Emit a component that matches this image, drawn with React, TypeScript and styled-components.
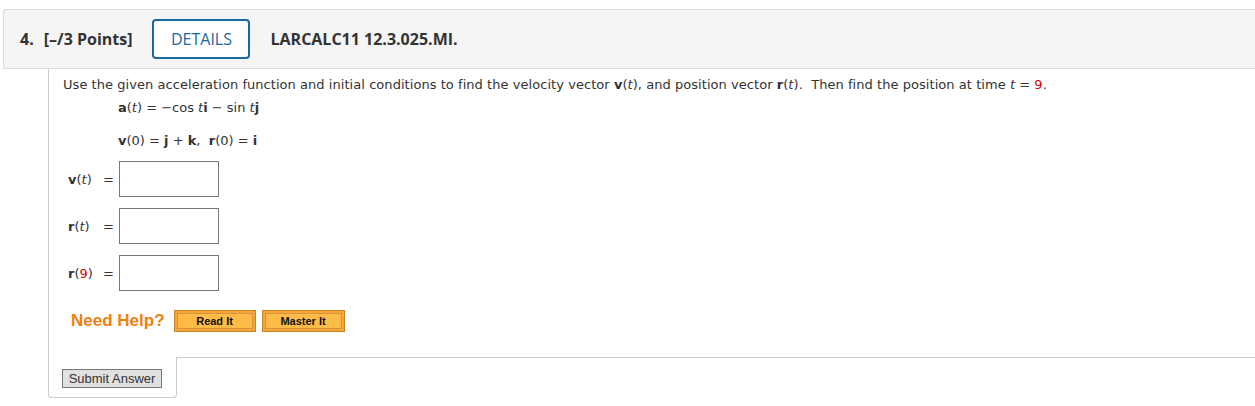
import React from 'react';
import styled, { createGlobalStyle } from 'styled-components';

const GlobalStyle = createGlobalStyle`
  html, body {
    margin: 0;
    padding: 0;
    background: #fff;
  }
  body {
    width: 1255px;
    overflow: hidden;
  }
`;

const Page = styled.div`
  padding-top: 9px;
  padding-left: 3px;
`;

const Header = styled.div`
  display: flex;
  align-items: center;
  height: 58px;
  background: #f5f5f5;
  border: 1px solid #dcdcdc;
  border-right: none;
  border-top-left-radius: 3px;
  padding-left: 16px;
  font-family: 'Open Sans', sans-serif;
  font-size: 16px;
  color: #333;
`;

const HeaderText = styled.span<{ $gap?: number }>`
  font-weight: 700;
  margin-right: ${(p) => p.$gap ?? 0}px;
`;

const DetailsButton = styled.button`
  height: 40px;
  width: 98px;
  box-sizing: border-box;
  border: 2px solid #1a68a0;
  border-radius: 4px;
  background: #fff;
  color: #1a68a0;
  font-family: 'Open Sans', sans-serif;
  font-size: 16px;
  margin-right: 20px;
  margin-left: -1px;
  padding: 0;
`;

const Body = styled.div`
  margin-left: 45px;
`;

const Content = styled.div`
  border-left: 1px solid #cccccc;
  padding: 7px 0 25px 14px;
  font-family: 'DejaVu Sans', Verdana, sans-serif;
  font-size: 13px;
  color: #333;
`;

const Prompt = styled.div`
  line-height: 18px;
  letter-spacing: 0.05px;
`;

const MathBlock = styled.div`
  padding-left: 55px;
  margin-top: 5px;
  display: flex;
  flex-direction: column;
  gap: 15px;
  line-height: 18px;
`;

const B = styled.b`
  font-weight: 700;
`;

const I = styled.i`
  font-style: italic;
`;

const Red = styled.span`
  color: #e00000;
`;

const AnswerList = styled.div`
  margin-top: 11px;
  display: flex;
  flex-direction: column;
  gap: 11px;
`;

const AnswerRow = styled.div`
  display: flex;
  align-items: center;
  padding-left: 5px;
  line-height: 18px;
`;

const AnswerLabel = styled.span`
  width: 35px;
  padding-top: 2px;
`;

const Equals = styled.span`
  width: 16px;
  padding-top: 2px;
`;

const AnswerBox = styled.div`
  width: 100px;
  height: 36px;
  box-sizing: border-box;
  border: 1px solid #777;
  background: #fff;
`;

const HelpRow = styled.div`
  display: flex;
  align-items: center;
  margin-top: 19px;
  padding-left: 8px;
  gap: 6px;
`;

const NeedHelp = styled.span`
  font-family: 'Liberation Sans', Arial, sans-serif;
  font-weight: 700;
  font-size: 17px;
  color: #ef7f0f;
  margin-right: 3px;
`;

const HelpButton = styled.button<{ $w: number }>`
  width: ${(p) => p.$w}px;
  height: 22px;
  box-sizing: border-box;
  padding: 2px;
  border: 1px solid #c7822c;
  background: #f8a534;
  display: flex;
  cursor: pointer;
`;

const HelpInner = styled.span`
  flex: 1;
  display: flex;
  align-items: center;
  justify-content: center;
  border: 1px solid #d39545;
  background: #ffbb48;
  font-family: 'Liberation Sans', Arial, sans-serif;
  font-weight: 700;
  font-size: 11px;
  color: #111;
`;

const Footer = styled.div`
  display: flex;
`;

const SubmitCell = styled.div`
  width: 114px;
  border: 1px solid #cccccc;
  border-top: none;
  border-radius: 0 0 4px 4px;
  padding: 12px 0 9px 13px;
`;

const FooterRest = styled.div`
  flex: 1;
  align-self: flex-start;
  border-top: 1px solid #cccccc;
`;

const SubmitButton = styled.button`
  display: block;
  width: 100px;
  height: 19px;
  box-sizing: border-box;
  padding: 0;
  border: 1px solid #767676;
  background: #e1e1e1;
  font-family: 'Liberation Sans', Arial, sans-serif;
  font-size: 13px;
  color: #333;
  line-height: 16px;
`;

const answers = [
  { key: 'v', label: <><B>v</B>(<I>t</I>)</> },
  { key: 'r', label: <><B>r</B>(<I>t</I>)</> },
  { key: 'r9', label: <><B>r</B>(<Red>9</Red>)</> },
];

const App: React.FC = () => (
  <Page>
    <GlobalStyle />
    <Header>
      <HeaderText $gap={10}>4.</HeaderText>
      <HeaderText $gap={21}>[–/3 Points]</HeaderText>
      <DetailsButton>DETAILS</DetailsButton>
      <HeaderText>LARCALC11 12.3.025.MI.</HeaderText>
    </Header>
    <Body>
      <Content>
        <Prompt>
          Use the given acceleration function and initial conditions to find the velocity vector&nbsp;
          <B>v</B>(<I>t</I>), and position vector <B>r</B>(<I>t</I>).&nbsp; Then find the position at time <I>t</I> = <Red>9</Red>.
        </Prompt>
        <MathBlock>
          <div>
            <B>a</B>(<I>t</I>) = −cos <I>t</I><B>i</B> − sin <I>t</I><B>j</B>
          </div>
          <div>
            <B>v</B>(0) = <B>j</B> + <B>k</B>,&nbsp; <B>r</B>(0) = <B>i</B>
          </div>
        </MathBlock>
        <AnswerList>
          {answers.map((a) => (
            <AnswerRow key={a.key}>
              <AnswerLabel>{a.label}</AnswerLabel>
              <Equals>=</Equals>
              <AnswerBox />
            </AnswerRow>
          ))}
        </AnswerList>
        <HelpRow>
          <NeedHelp>Need Help?</NeedHelp>
          <HelpButton $w={82}><HelpInner>Read It</HelpInner></HelpButton>
          <HelpButton $w={83}><HelpInner>Master It</HelpInner></HelpButton>
        </HelpRow>
      </Content>
      <Footer>
        <SubmitCell>
          <SubmitButton>Submit Answer</SubmitButton>
        </SubmitCell>
        <FooterRest />
      </Footer>
    </Body>
  </Page>
);

export default App;
